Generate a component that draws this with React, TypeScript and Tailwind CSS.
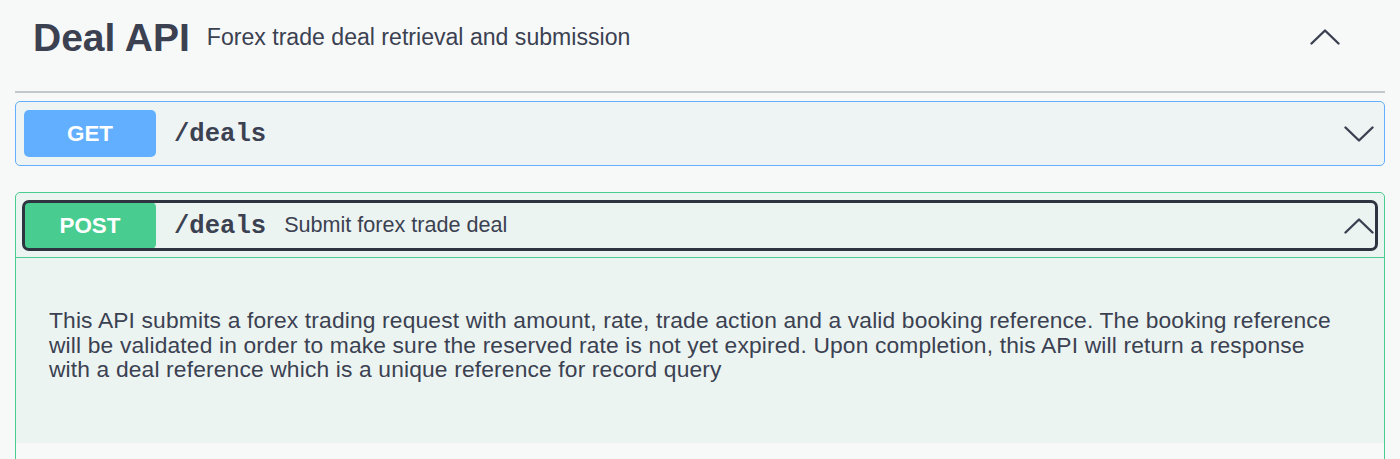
import React from 'react';

const sans = "font-['Liberation_Sans',Arial,sans-serif]";
const mono = "font-['Liberation_Mono','Courier_New',monospace]";

function Chevron({ up, className }: { up?: boolean; className?: string }) {
    return (
        <svg width="30" height="16" viewBox="0 0 30 16" fill="none" className={className}>
            <polyline
                points={up ? '1.5,14.5 15,1.5 28.5,14.5' : '1.5,1.5 15,14.5 28.5,1.5'}
                stroke="#3b4151"
                strokeWidth="2.4"
                strokeLinecap="round"
                strokeLinejoin="round"
            />
        </svg>
    );
}

export default function App() {
    return (
        <div className={`min-h-[459px] bg-[#f7f9f9] text-[#3b4151] ${sans} overflow-hidden`}>
            <div className="px-[15px]">
                {/* tag header */}
                <div className="flex items-center h-[93px] pb-[17px] border-b-2 border-[#c3c8cb]">
                    <h3 className="pl-[18px] text-[39px] font-bold leading-none">Deal API</h3>
                    <span className="ml-[17px] text-[23.1px] leading-none pt-[2px]">
                        Forex trade deal retrieval and submission
                    </span>
                    <Chevron up className="ml-auto mr-[45px]" />
                </div>

                {/* GET */}
                <div className="mt-[8px] rounded-[5px] border border-[#61affe] bg-[#eef4f4] p-[8px]">
                    <div className="flex items-center">
                        <span className="w-[132px] h-[47px] flex items-center justify-center rounded-[5px] bg-[#61affe] text-white font-bold text-[22.4px]">
                            GET
                        </span>
                        <span className={`ml-[18px] pt-[4px] ${mono} font-bold text-[25.6px]`}>/deals</span>
                        <Chevron className="ml-auto mr-[2px]" />
                    </div>
                </div>

                {/* POST */}
                <div className="mt-[26px] rounded-[5px] border border-[#49cc90] bg-[#ecf4f1]">
                    <div className="pt-[9px] px-[8px] pb-[8px] border-b border-[#49cc90]">
                        <div className="flex items-center rounded-[5px] outline-3 outline-[#2f3441] -outline-offset-1">
                            <span className="w-[132px] h-[47px] flex items-center justify-center rounded-[5px] bg-[#49cc90] text-white font-bold text-[22.4px]">
                                POST
                            </span>
                            <span className={`ml-[18px] pt-[4px] ${mono} font-bold text-[25.6px]`}>/deals</span>
                            <span className="ml-[18px] text-[21.6px]">Submit forex trade deal</span>
                            <Chevron up className="ml-auto mr-[2px]" />
                        </div>
                    </div>
                    <div className="pl-[33px] pr-[39px] pt-[50px] pb-[61px]">
                        <p className="text-[22.8px] leading-[24.5px] tracking-[0.15px]">
                            This API submits a forex trading request with amount, rate, trade action and a valid booking reference. The booking reference will be validated in order to make sure the reserved rate is not yet expired. Upon completion, this API will return a response with a deal reference which is a unique reference for record query
                        </p>
                    </div>
                    <div className="h-[60px] bg-[#f6f9f8]" />
                </div>
            </div>
        </div>
    );
}
